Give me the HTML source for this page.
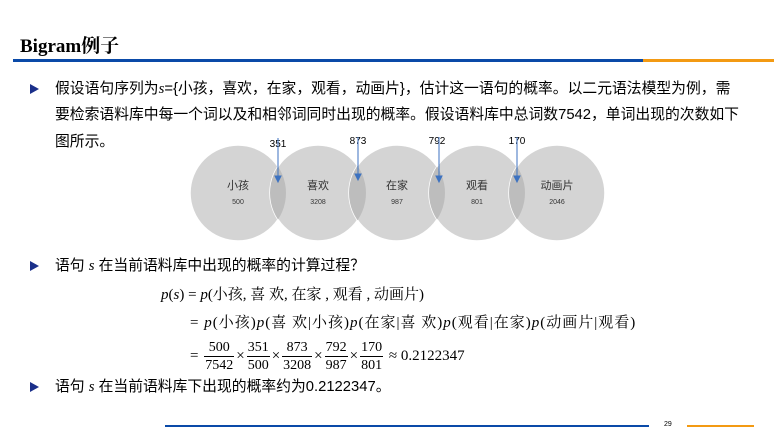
<!DOCTYPE html>
<html><head><meta charset="utf-8"><style>
*{margin:0;padding:0}
body{width:783px;height:438px;background:#fff;position:relative;overflow:hidden;font-family:"Liberation Sans","Noto Sans CJK SC",sans-serif;color:#000}
.a{position:absolute;white-space:nowrap}
.t{font-size:14.8px;line-height:20px}
.bul{position:absolute;width:0;height:0;border-top:5px solid transparent;border-bottom:5px solid transparent;border-left:9px solid #1a2f8a}
.m{font-family:"Liberation Serif","Noto Serif CJK SC",serif;font-size:15px}
.frac{display:inline-block;vertical-align:middle;text-align:center;font-family:"Liberation Serif",serif;font-size:14px;line-height:17px;margin:0 2px}
.frac span{display:block;padding:0 1px}
.frac span:first-child{border-bottom:1px solid #000}
i{font-family:"Liberation Serif",serif}
</style></head><body>
<div class="a" style="left:20px;top:31px;font-family:'Liberation Serif','Noto Serif CJK SC',serif;font-weight:bold;font-size:19px">Bigram例子</div>
<div class="a" style="left:13px;top:59px;width:630px;height:3px;background:#0a4aa8"></div>
<div class="a" style="left:643px;top:59px;width:131px;height:3px;background:#f39a13"></div>

<div class="bul" style="left:30px;top:84px"></div>
<div class="a t" style="left:55px;top:79px">假设语句序列为<i>s</i>={小孩，喜欢，在家，观看，动画片}，估计这一语句的概率。以二元语法模型为例，需</div>
<div class="a t" style="left:55px;top:105px">要检索语料库中每一个词以及和相邻词同时出现的概率。假设语料库中总词数7542，单词出现的次数如下</div>
<div class="a t" style="left:55px;top:132px">图所示。</div>

<svg class="a" style="left:0;top:0" width="783" height="438">
<defs>
<clipPath id="c1"><circle cx="238" cy="193" r="48"/></clipPath>
<clipPath id="c2"><circle cx="318" cy="193" r="48"/></clipPath>
<clipPath id="c3"><circle cx="397" cy="193" r="48"/></clipPath>
<clipPath id="c4"><circle cx="477" cy="193" r="48"/></clipPath>
</defs>
<g fill="#d4d4d4" stroke="#fff" stroke-width="1.5">
<circle cx="238" cy="193" r="48"/><circle cx="318" cy="193" r="48"/><circle cx="397" cy="193" r="48"/><circle cx="477" cy="193" r="48"/><circle cx="557" cy="193" r="48"/>
</g>
<g fill="#bdbdbd">
<circle cx="318" cy="193" r="48" clip-path="url(#c1)"/>
<circle cx="397" cy="193" r="48" clip-path="url(#c2)"/>
<circle cx="477" cy="193" r="48" clip-path="url(#c3)"/>
<circle cx="557" cy="193" r="48" clip-path="url(#c4)"/>
</g>
<g font-family="Liberation Sans,Noto Sans CJK SC,sans-serif" text-anchor="middle" fill="#333">
<text x="238" y="189" font-size="11">小孩</text><text x="238" y="204" font-size="7">500</text>
<text x="318" y="189" font-size="11">喜欢</text><text x="318" y="204" font-size="7">3208</text>
<text x="397" y="189" font-size="11">在家</text><text x="397" y="204" font-size="7">987</text>
<text x="477" y="189" font-size="11">观看</text><text x="477" y="204" font-size="7">801</text>
<text x="557" y="189" font-size="11">动画片</text><text x="557" y="204" font-size="7">2046</text>
</g>
<g font-family="Liberation Sans,sans-serif" font-size="10" fill="#000" text-anchor="middle">
<text x="278" y="147">351</text><text x="358" y="144">873</text><text x="437" y="144">792</text><text x="517" y="144">170</text>
</g>
<g stroke="#3d72c0" stroke-width="1" fill="#3d72c0">
<line x1="278" y1="138" x2="278" y2="178"/><path d="M275 176L278 182L281 176Z"/>
<line x1="358" y1="137" x2="358" y2="176"/><path d="M355 174L358 180L361 174Z"/>
<line x1="439" y1="137" x2="439" y2="178"/><path d="M436 176L439 182L442 176Z"/>
<line x1="517" y1="137" x2="517" y2="178"/><path d="M514 176L517 182L520 176Z"/>
</g>
</svg>

<div class="bul" style="left:30px;top:261px"></div>
<div class="a t" style="left:55px;top:256px">语句 <i>s</i> 在当前语料库中出现的概率的计算过程？</div>
<div class="a m" style="left:161px;top:283px"><i>p</i>(<i>s</i>) = <i>p</i>(小孩, 喜 欢, 在家 , 观看 , 动画片)</div>
<div class="a m" style="left:190px;top:311px;letter-spacing:1px">= <i>p</i>(小孩)<i>p</i>(喜 欢|小孩)<i>p</i>(在家|喜 欢)<i>p</i>(观看|在家)<i>p</i>(动画片|观看)</div>
<div class="a m" style="left:190px;top:339px;line-height:17px">= <span class="frac"><span>500</span><span>7542</span></span>×<span class="frac"><span>351</span><span>500</span></span>×<span class="frac"><span>873</span><span>3208</span></span>×<span class="frac"><span>792</span><span>987</span></span>×<span class="frac"><span>170</span><span>801</span></span> ≈ 0.2122347</div>
<div class="bul" style="left:30px;top:382px"></div>
<div class="a t" style="left:55px;top:377px">语句 <i>s</i> 在当前语料库下出现的概率约为0.2122347。</div>

<div class="a" style="left:165px;top:425px;width:484px;height:2px;background:#0a4aa8"></div>
<div class="a" style="left:664px;top:421px;font-size:7px">29</div>
<div class="a" style="left:687px;top:425px;width:67px;height:2px;background:#f39a13"></div>
</body></html>
